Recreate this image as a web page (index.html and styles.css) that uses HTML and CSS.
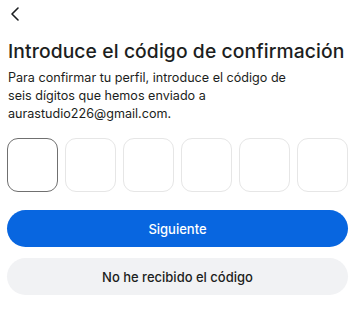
FILE: index.html
```html
<!DOCTYPE html>
<html lang="es">
  <head>
    <meta charset="UTF-8" />
    <meta name="viewport" content="width=device-width, initial-scale=1.0" />
    <link rel="stylesheet" href="styles.css">
    <title>Código de confirmación</title>
  </head>
  <body>
    <div class="page">
      <button class="back" aria-label="Atrás">
        <svg width="10" height="14" viewBox="0 0 10 14">
          <path d="M8 1 L2 7 L8 13" fill="none" stroke="#1c1e21" stroke-width="1.6" stroke-linecap="round" stroke-linejoin="round"/>
        </svg>
      </button>
      <h1 class="title">Introduce el código de confirmación</h1>
      <p class="text">Para confirmar tu perfil, introduce el código de<br>seis dígitos que hemos enviado a<br>aurastudio226@gmail.com.</p>
      <div class="code">
        <div class="digit active"></div>
        <div class="digit"></div>
        <div class="digit"></div>
        <div class="digit"></div>
        <div class="digit"></div>
        <div class="digit"></div>
      </div>
      <button class="btn primary">Siguiente</button>
      <button class="btn secondary">No he recibido el código</button>
    </div>
  </body>
</html>
```

FILE: styles.css
```css
body {
    margin: 0;
    background: #fff;
    font-family: Inter, "Noto Sans", sans-serif;
    color: #1c1e21;
}

.page {
    padding: 0 7px 0 8px;
    display: flex;
    flex-direction: column;
}

.back {
    align-self: flex-start;
    background: none;
    border: 0;
    padding: 0;
    margin: 7px 0 0 1px;
    width: 12px;
    height: 14px;
}

.title {
    margin: 18px 0 0;
    font-size: 19.3px;
    font-weight: 500;
    line-height: 24px;
    letter-spacing: 0.1px;
}

.text {
    margin: 6px 0 0;
    font-size: 12.6px;
    line-height: 18px;
}

.code {
    display: grid;
    grid-template-columns: repeat(6, 1fr);
    gap: 7.5px;
    margin: 15px 1px 0 -1px;
}

.digit {
    height: 54px;
    border: 1px solid #e6e6e6;
    border-radius: 11px;
    box-sizing: border-box;
}

.digit.active {
    border: 1.5px solid #707070;
}

.btn {
    border: 0;
    border-radius: 20px;
    height: 37px;
    font-family: Inter, "Noto Sans", sans-serif;
    font-size: 13px;
    font-weight: 500;
    margin: 0 1px 0 -1px;
}

.primary {
    margin-top: 18px;
    background: #0866e0;
    color: #fff;
}

.secondary {
    margin-top: 11px;
    background: #f1f2f4;
    color: #1c1e21;
}
```
